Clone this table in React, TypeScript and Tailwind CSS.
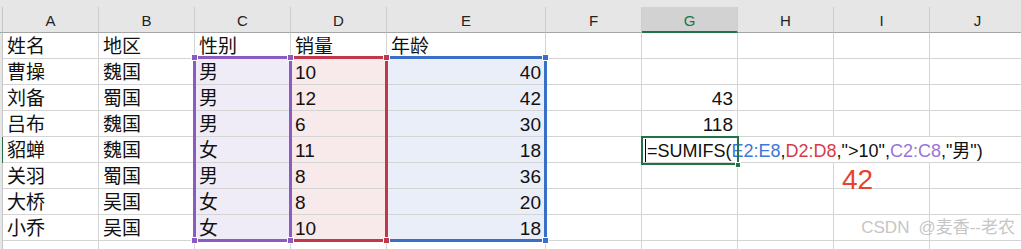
import React from "react";

type Col = { key: string; w: string };

const cols: Col[] = [
  { key: "A", w: "w-[96px]" },
  { key: "B", w: "w-[96px]" },
  { key: "C", w: "w-[96px]" },
  { key: "D", w: "w-[96px]" },
  { key: "E", w: "w-[159px]" },
  { key: "F", w: "w-[96px]" },
  { key: "G", w: "w-[96px]" },
  { key: "H", w: "w-[96px]" },
  { key: "I", w: "w-[96px]" },
  { key: "J", w: "w-[96px]" },
];

const table: string[][] = [
  ["姓名", "地区", "性别", "销量", "年龄"],
  ["曹操", "魏国", "男", "10", "40"],
  ["刘备", "蜀国", "男", "12", "42"],
  ["吕布", "魏国", "男", "6", "30"],
  ["貂蝉", "魏国", "女", "11", "18"],
  ["关羽", "蜀国", "男", "8", "36"],
  ["大桥", "吴国", "女", "8", "20"],
  ["小乔", "吴国", "女", "10", "18"],
  ["", "", "", "", ""],
];

// column G values by row index
const gValues: Record<number, string> = { 2: "43", 3: "118" };

const fills: Record<string, string> = {
  C: "bg-[#efecf7]",
  D: "bg-[#f8e9ea]",
  E: "bg-[#e9eef8]",
};

const FORMULA_ROW = 4;
const RESULT_ROW = 5;

function Formula() {
  return (
    <>
      {/* active cell frame + fill handle */}
      <div className="absolute -left-px -top-px w-[98px] h-[29px] border-2 border-[#217346] z-20" />
      <div className="absolute left-[93px] top-[25px] w-[6px] h-[6px] bg-[#217346] border border-white z-30" />
      <span className="relative z-10 flex items-center whitespace-nowrap text-[18px]">
        <span className="w-px h-[23px] bg-black mr-[1px] -mt-[2px]" />
        =SUMIFS(
        <span className="text-[#3d78d8]">E2:E8</span>,
        <span className="text-[#d83a48]">D2:D8</span>,"&gt;10",
        <span className="text-[#9a74d6]">C2:C8</span>,"男")
      </span>
    </>
  );
}

function Cell({ col, row }: { col: Col; row: number }) {
  const colIdx = cols.indexOf(col);
  const value = colIdx < 5 ? table[row][colIdx] : col.key === "G" ? gValues[row] : undefined;
  const inRange = row >= 1 && row <= 7;
  const fill = inRange && fills[col.key] ? fills[col.key] : "";
  const isFormula = row === FORMULA_ROW && col.key === "G";
  const isResult = row === RESULT_ROW && col.key === "I";
  const rightAlign = ((col.key === "E" && row > 0) || col.key === "G") && !isFormula;
  const noRight = row === FORMULA_ROW && (col.key === "H" || col.key === "I");

  return (
    <div
      className={`${col.w} ${fill} relative h-[26px] shrink-0 border-b border-[#d4d4d4] flex items-center pt-[3px] px-[4px] ${
        noRight ? "" : "border-r"
      } ${rightAlign ? "justify-end" : ""} ${isFormula ? "pl-[3px]" : ""}`}
    >
      {isFormula ? (
        <Formula />
      ) : isResult ? (
        <span className="relative z-10 pl-[4px] pt-[6px] text-[28px] leading-none text-[#e8412f]">42</span>
      ) : (
        value
      )}
    </div>
  );
}

function Handle({ x, y, color }: { x: string; y: string; color: string }) {
  return <div className={`absolute ${x} ${y} ${color} w-[7px] h-[7px] border border-white z-30`} />;
}

export default function App() {
  return (
    <div className="relative w-[1021px] h-[249px] overflow-hidden bg-white text-[19px] text-[#111] font-['Liberation_Sans','Noto_Sans_CJK_SC',sans-serif]">
      {/* column headers */}
      <div className="flex pt-[7px] bg-[#e6e6e6] text-[15px] text-[#222]">
        <div className="w-[3px] h-[26px] shrink-0 border-r border-b border-r-[#c6c6c6] border-b-[#a6a6a6]" />
        {cols.map((c) => (
          <div
            key={c.key}
            className={`${c.w} h-[26px] shrink-0 flex items-center justify-center pt-[4px] border-r border-r-[#cdcdcd] ${
              c.key === "G"
                ? "bg-[#d2d2d2] border-b-2 border-b-[#217346] text-[#217346]"
                : "border-b border-b-[#a6a6a6]"
            }`}
          >
            {c.key}
          </div>
        ))}
      </div>

      {/* rows */}
      {table.map((_, r) => (
        <div key={r} className="flex">
          <div
            className={`w-[3px] h-[26px] shrink-0 bg-[#e6e6e6] border-r ${
              r === FORMULA_ROW ? "border-r-[#217346]" : "border-r-[#c6c6c6]"
            }`}
          />
          {cols.map((c) => (
            <Cell key={c.key} col={c} row={r} />
          ))}
        </div>
      ))}

      {/* formula reference outlines: E2:E8, D2:D8, C2:C8 */}
      <div className="absolute left-[385px] top-[56px] w-[162px] h-[186px] border-[3px] border-[#3a6fc8] z-20" />
      <div className="absolute left-[289px] top-[56px] w-[99px] h-[186px] border-[3px] border-[#c2374a] z-20" />
      <div className="absolute left-[193px] top-[56px] w-[99px] h-[186px] border-[3px] border-[#8a5bc1] z-20" />

      <Handle x="left-[542px]" y="top-[54px]" color="bg-[#3a6fc8]" />
      <Handle x="left-[542px]" y="top-[237px]" color="bg-[#3a6fc8]" />
      <Handle x="left-[383px]" y="top-[54px]" color="bg-[#c2374a]" />
      <Handle x="left-[383px]" y="top-[237px]" color="bg-[#c2374a]" />
      <Handle x="left-[191px]" y="top-[54px]" color="bg-[#8a5bc1]" />
      <Handle x="left-[287px]" y="top-[54px]" color="bg-[#8a5bc1]" />
      <Handle x="left-[191px]" y="top-[237px]" color="bg-[#8a5bc1]" />
      <Handle x="left-[287px]" y="top-[237px]" color="bg-[#8a5bc1]" />

      {/* watermark */}
      <div className="absolute right-[6px] bottom-[9px] text-[17px] text-[#c6c6c6] z-20 whitespace-nowrap">
        CSDN<span className="ml-[9px]">@麦香--老农</span>
      </div>
    </div>
  );
}
